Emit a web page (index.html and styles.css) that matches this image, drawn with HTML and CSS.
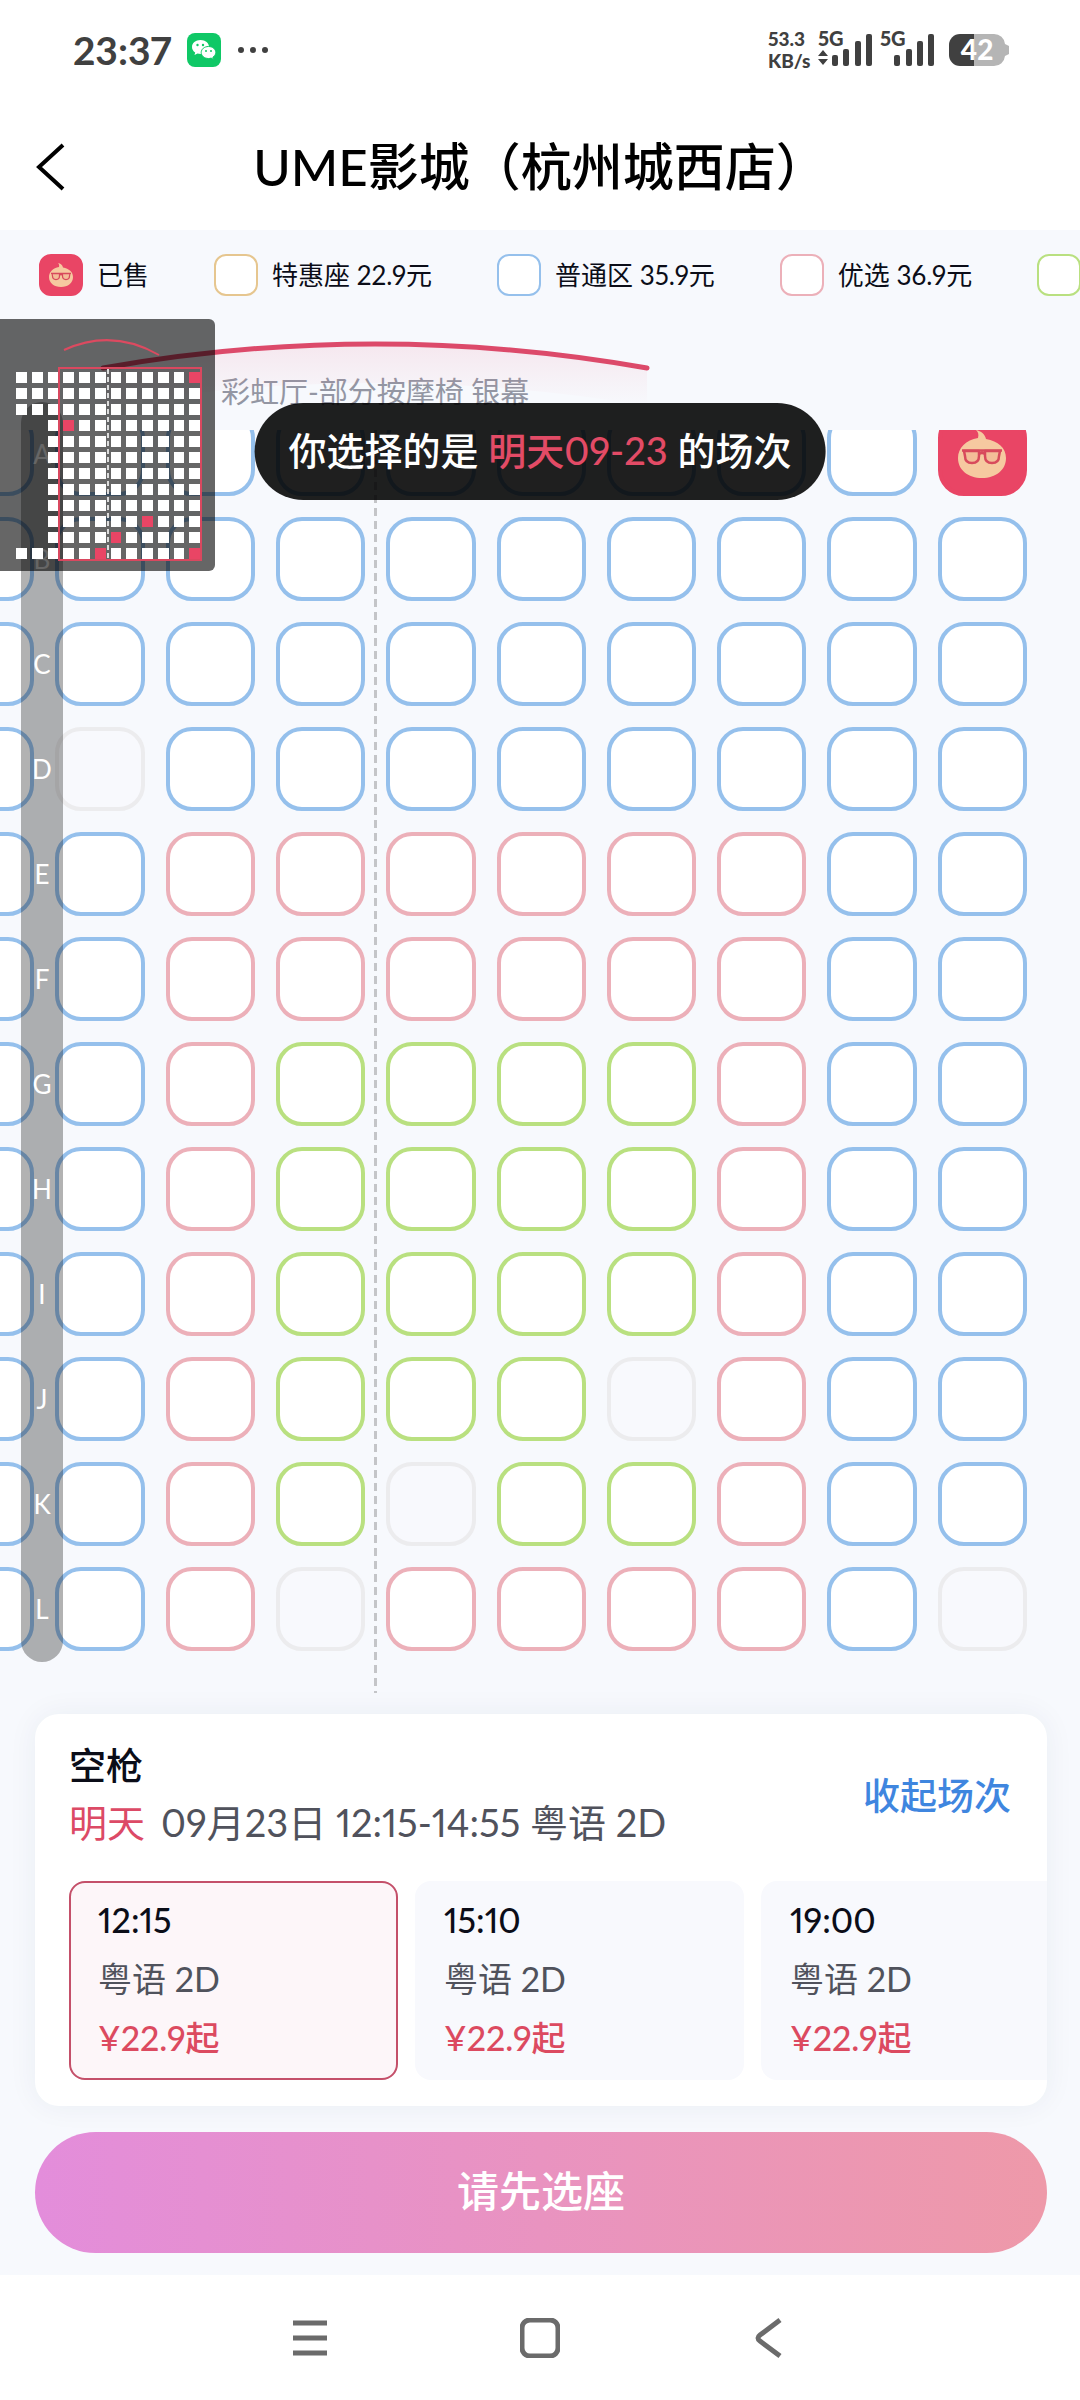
FILE: index.html
```
<!DOCTYPE html>
<html lang="zh-CN">
<head>
    <meta charset="UTF-8">
    <meta name="viewport" content="width=device-width, initial-scale=1">
    <title>选座购票</title>
    <link rel="stylesheet" href="styles.css">
</head>
<body>
    <svg class="defs" aria-hidden="true">
        <symbol id="face" viewBox="0 0 48 48">
            <path d="M18 0c5 1 9 4 10 9 12 2 20 9 20 19 0 12-10 20-24 20S0 40 0 28C0 18 8 10 20 8c1-4 0-6-2-8z" fill="#f6c9a0"/>
            <g fill="#f3bd98" stroke="#d84a5c" stroke-width="2.500" stroke-linejoin="round">
                <path d="M6 21h15v5c0 5-3 7-7 7s-7-2-7-7z"/>
                <path d="M27 21h15l-1 5c0 5-3 7-7 7s-7-2-7-7z"/>
                <path d="M4 20.500h40M21 24q3-2 6 0" fill="none"/>
            </g>
        </symbol>
    </svg>

    <div class="status">
        <span class="time">23:37</span>
        <svg width="34" height="34" viewBox="0 0 34 34">
            <rect width="34" height="34" rx="8" fill="#0fc866"/>
            <path d="M13.500 7C8.500 7 5 10 5 14c0 2.300 1.200 4.200 3.200 5.500L7.500 22l3-1.500c1 .3 2 .5 3 .5 5 0 8.500-3 8.500-7s-3.500-7-8.500-7z" fill="#fff"/>
            <path d="M21.500 13.500c-4.200 0-7.300 2.700-7.300 6s3.100 6 7.300 6c.9 0 1.800-.1 2.600-.4l2.400 1.300-.6-2.200c1.800-1.100 2.900-2.800 2.900-4.700 0-3.300-3.100-6-7.300-6z" fill="#fff" stroke="#0fc866"/>
            <g fill="#0fc866"><circle cx="10.500" cy="12" r="1.200"/><circle cx="16" cy="12" r="1.200"/><circle cx="19" cy="18" r="1"/><circle cx="24" cy="18" r="1"/></g>
        </svg>
        <svg width="32" height="8" viewBox="0 0 32 8" fill="#404040">
            <circle cx="4" cy="4" r="3"/><circle cx="16" cy="4" r="3"/><circle cx="28" cy="4" r="3"/>
        </svg>
        <div class="speed">53.3<br>KB/s</div>
        <svg class="signal" width="118" height="48" viewBox="0 -4 118 48">
            <text x="0" y="16">5G</text>
            <path d="M0 26l5-6 5 6zM0 29l5 6 5-6z"/>
            <rect x="14" y="25" width="6" height="11" rx="2"/><rect x="25" y="19" width="6" height="17" rx="2"/><rect x="37" y="11" width="6" height="25" rx="2"/><rect x="48" y="4" width="6" height="32" rx="2"/>
            <text x="62" y="16">5G</text>
            <rect x="76" y="25" width="6" height="11" rx="2"/><rect x="88" y="19" width="6" height="17" rx="2"/><rect x="99" y="11" width="6" height="25" rx="2"/><rect x="110" y="4" width="6" height="32" rx="2"/>
        </svg>
        <svg class="battery" width="62" height="34" viewBox="0 0 62 34">
            <path d="M26 1h20a11 11 0 0 1 11 10l4 2v8l-4 2a11 11 0 0 1-11 10H26z" fill="#b5b5b5"/>
            <path d="M26 1H12A11 11 0 0 0 1 12v10a11 11 0 0 0 11 11h14z" fill="#404040"/>
            <text x="29" y="27">42</text>
        </svg>
    </div>

    <header class="header">
        <button class="back" aria-label="返回">
            <svg width="30" height="48" viewBox="0 0 30 48" fill="none" stroke="#000" stroke-width="4"><path d="M27 2L3 24l24 22"/></svg>
        </button>
        <h1>UME影城（杭州城西店）</h1>
    </header>

    <main>
        <ul class="legend">
            <li><span class="swatch sold"><svg width="24" height="24"><use href="#face"/></svg></span>已售</li>
            <li><span class="swatch cheap"></span>特惠座 22.9元</li>
            <li><span class="swatch normal"></span>普通区 35.9元</li>
            <li><span class="swatch prime"></span>优选 36.9元</li>
            <li><span class="swatch best"></span></li>
        </ul>

        <section class="hall">
            <svg class="screen" width="660" height="80" viewBox="0 0 660 80">
                <defs>
                    <linearGradient id="glow" x1="0" y1="0" x2="0" y2="1">
                        <stop offset="0" stop-color="#e8486a" stop-opacity=".1"/>
                        <stop offset="1" stop-color="#e8486a" stop-opacity="0"/>
                    </linearGradient>
                </defs>
                <path d="M103 34Q375-14 647 34V72Q375 26 103 72z" fill="url(#glow)"/>
                <path d="M103 34Q375-14 647 34" fill="none" stroke="#dc4a6a" stroke-width="5" stroke-linecap="round"/>
            </svg>
            <p class="hall-name">彩虹厅-部分按摩椅 银幕</p>

            <div class="seat-window">
                <div class="seats" id="seats"></div>
                <div class="aisle"></div>
            </div>

            <div class="row-bar" id="rowBar"></div>

            <div class="minimap">
                <svg class="mini-screen" width="100" height="20" viewBox="0 0 100 20"><path d="M2 11Q50-11 97 16" fill="none" stroke="#dc4a60" stroke-width="2"/></svg>
                <div class="mini-seats" id="miniSeats"></div>
                <div class="mini-aisle"></div>
                <div class="mini-view"></div>
            </div>

            <div class="toast" role="status">你选择的是 <em>明天09-23</em> 的场次</div>
        </section>

        <section class="card">
            <div class="card-head">
                <div>
                    <h2>空枪</h2>
                    <p><b>明天</b>09月23日 12:15-14:55 粤语 2D</p>
                </div>
                <button class="fold">收起场次</button>
            </div>
            <div class="sessions">
                <button class="session active"><strong>12:15</strong><span>粤语 2D</span><em>¥22.9起</em></button>
                <button class="session"><strong>15:10</strong><span>粤语 2D</span><em>¥22.9起</em></button>
                <button class="session"><strong>19:00</strong><span>粤语 2D</span><em>¥22.9起</em></button>
            </div>
        </section>

        <button class="submit">请先选座</button>
    </main>

    <nav class="nav">
        <button aria-label="菜单"><svg width="40" height="40" viewBox="0 0 40 40"><path d="M3 5h34M3 20h34M3 35h34"/></svg></button>
        <button aria-label="主页"><svg width="40" height="40" viewBox="0 0 40 40"><rect x="2" y="2" width="36" height="36" rx="8"/></svg></button>
        <button aria-label="后退"><svg width="40" height="40" viewBox="0 0 40 40"><path d="M30 2L10 17q-4 3 0 6l20 15"/></svg></button>
    </nav>

    <script>
        // 座位图: b 普通区, p 优选, g 黄金区, x 不可选, s 已售
        const rows = {
            A: 'bbbbbbbbbs',
            B: 'bbbbbbbbbb',
            C: 'bbbbbbbbbb',
            D: 'bxbbbbbbbb',
            E: 'bbppppppbb',
            F: 'bbppppppbb',
            G: 'bbpggggpbb',
            H: 'bbpggggpbb',
            I: 'bbpggggpbb',
            J: 'bbpgggxpbb',
            K: 'bbpgxggpbb',
            L: 'bbpxppppbx'
        };
        const types = { b: 'normal', p: 'prime', g: 'best', x: 'off', s: 'sold' };

        let seatHTML = '';
        let barHTML = '';
        let miniHTML = '';
        for (const row in rows) {
            barHTML += `<span>${row}</span>`;
            // 左侧两列只有 A B C L 排有座位
            const left = 'ABCL'.includes(row) ? '<i></i><i></i>' : '<i class="empty"></i><i class="empty"></i>';
            miniHTML += left;
            [...rows[row]].forEach((type, i) => {
                const taken = type === 's' || type === 'x';
                const face = type === 's' ? '<svg width="48" height="48"><use href="#face"/></svg>' : '';
                seatHTML += `<label class="seat ${types[type]}"><input type="checkbox" aria-label="${row}排${i + 3}座" ${taken ? 'disabled' : ''}>${face}</label>`;
                miniHTML += `<i class="${taken ? 'taken' : ''}"></i>`;
            });
        }
        document.getElementById('seats').innerHTML = seatHTML;
        document.getElementById('rowBar').innerHTML = barHTML;
        document.getElementById('miniSeats').innerHTML = miniHTML;
    </script>
</body>
</html>
```
FILE: styles.css
```
* { box-sizing: border-box; }
body { margin: 0; background: #fff; color: #0b0d18; font-family: Lato, "Noto Sans CJK SC", sans-serif; font-variant-numeric: proportional-nums; overflow-x: hidden; }
button { padding: 0; border: none; background: none; color: inherit; font: inherit; cursor: pointer; }
svg { display: block; flex: none; }
h1, h2, p, ul { margin: 0; padding: 0; }
em { font-style: normal; }
.defs { position: absolute; width: 0; height: 0; }

/* 状态栏 */
.status { display: flex; align-items: center; height: 100px; padding: 0 70px 0 73px; color: #404040; }
.time { margin-right: 16px; font-size: 39px; font-weight: 700; }
.status .time + svg { margin-right: 16px; }
.speed { margin-left: auto; width: 50px; font-size: 19px; font-weight: 900; line-height: 22px; white-space: nowrap; }
.signal { margin-right: 12px; fill: #404040; font-size: 20px; font-weight: 900; }
.battery { fill: #fff; font-size: 28px; font-weight: 900; text-anchor: middle; }

.header { display: flex; align-items: center; height: 130px; padding: 4px 36px 0; }
.header h1 { flex: 1; padding-right: 30px; font-size: 51px; font-weight: 500; line-height: 72px; text-align: center; color: #000; }

main { background: #f7f9fd; padding-bottom: 22px; }

/* 图例 */
.legend { display: flex; height: 89px; padding: 0 39px; align-items: center; list-style: none; overflow: hidden; font-size: 26px; line-height: 36px; white-space: nowrap; }
.legend li { display: flex; align-items: center; gap: 14px; flex: none; margin-right: 65px; }
.swatch { display: flex; align-items: center; justify-content: center; width: 44px; height: 42px; border: 2px solid; border-radius: 12px; background: #fff; }
.cheap { border-color: #e6c68f; }
.normal { border-color: #95c0ec; }
.prime { border-color: #ecb0b9; }
.best { border-color: #b9e080; }
.off { border-color: #ececee; }
.sold { border-color: #e94565; }
.swatch.sold, .seat.sold { background: #e94565; }

/* 影厅 */
.hall { position: relative; padding-bottom: 21px; }
.screen { position: absolute; left: 0; top: 15px; }
.hall-name { height: 111px; padding: 53px 0 0 221px; font-size: 29px; line-height: 40px; color: #9396a3; }
.seat-window { position: relative; overflow: hidden; padding-bottom: 42px; }
.seats { display: grid; grid-template-columns: repeat(10, 1fr); gap: 21px; margin: -18px 53px 0 -55px; }
.seat { display: flex; align-items: center; justify-content: center; height: 84px; border-width: 4px; border-style: solid; border-radius: 26px; background: #fff; }
.seat.off { background: #f8f9fd; }
.seat input { position: absolute; opacity: 0; }
.aisle { position: absolute; left: 374px; top: 0; bottom: 0; width: 3px; background: repeating-linear-gradient(#c4c5c8 0 8px, transparent 8px 13px); }
.row-bar { position: absolute; left: 21px; top: 83px; width: 42px; border-radius: 21px; background: rgba(0, 0, 0, .3); color: #fff; font-size: 26px; line-height: 105px; text-align: center; }
.row-bar span { display: block; }

/* 缩略图 */
.minimap { position: absolute; left: 0; top: 0; width: 215px; height: 252px; padding: 53px 15px 0 16px; border-radius: 0 6px 6px 0; background: rgba(0, 0, 0, .6); }
.mini-screen { position: absolute; left: 62px; top: 20px; }
.mini-seats { display: grid; grid-template-columns: repeat(12, 1fr); gap: 5px; }
.mini-seats i { height: 11px; background: #fff; }
.mini-seats .taken { background: #e94565; }
.mini-seats .empty { background: none; }
.mini-aisle { position: absolute; left: 107px; top: 50px; height: 190px; width: 2px; background: repeating-linear-gradient(#ddd 0 5px, transparent 5px 8px); }
.mini-view { position: absolute; left: 58px; top: 48px; width: 144px; height: 194px; border: 2px solid #d9485f; }

.toast { position: absolute; left: 50%; top: 84px; transform: translateX(-50%); padding: 0 34px 2px; border-radius: 49px; background: rgba(0, 0, 0, .88); color: #fff; font-size: 38px; font-weight: 500; line-height: 95px; white-space: nowrap; }
.toast em { color: #e34b66; }

/* 场次 */
.card { margin: 0 33px 26px 35px; padding: 24px 0 26px 34px; border-radius: 24px; background: #fff; box-shadow: 0 0 30px rgba(40, 50, 90, .06); overflow: hidden; }
.card-head { display: flex; align-items: center; justify-content: space-between; padding-right: 36px; margin-bottom: 31px; }
.card h2 { font-size: 37px; font-weight: 500; line-height: 56px; }
.card p { font-size: 38px; line-height: 56px; color: #50525c; }
.card b { margin-right: 16px; font-weight: 400; color: #dc4a66; }
.fold { color: #3f86df; font-size: 37px; font-weight: 500; }
.sessions { display: flex; gap: 17px; overflow: hidden; }
.session { flex: 0 0 329px; padding: 7px 27px 11px; border: 2px solid #f8f9fd; border-radius: 16px; background: #f8f9fd; text-align: left; font-size: 34px; line-height: 59px; }
.session > * { display: block; }
.session strong { font-weight: 500; }
.session span { color: #50525c; }
.session em { color: #dc4a60; font-weight: 500; }
.session.active { border-color: #c4506a; background: #fdf6f9; }

.submit { display: block; width: calc(100% - 68px); height: 121px; margin: 0 33px 0 35px; padding-bottom: 8px; border-radius: 61px; background: linear-gradient(90deg, #e38ddb, #e993c0 50%, #ee99a9); color: #fff; font-size: 42px; font-weight: 500; }

.nav { display: flex; justify-content: center; gap: 190px; height: 125px; }
.nav svg { fill: none; stroke: #6b6b6b; stroke-width: 5; }
```
